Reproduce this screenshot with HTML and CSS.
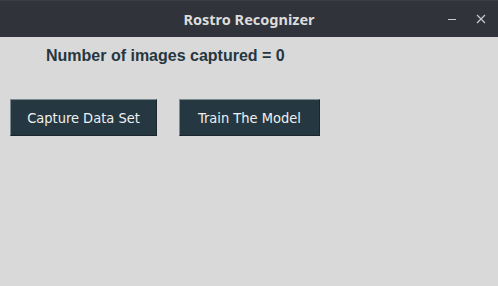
FILE: index.html
```html
<!DOCTYPE html>
<html lang="en">
<head>
    <meta charset="UTF-8">
    <title>Rostro Recognizer</title>
    <link rel="stylesheet" href="styles.css">
</head>
<body>
    <!-- Window title bar -->
    <header class="titlebar">
        <span class="title">Rostro Recognizer</span>
        <div class="controls">
            <svg class="ctl" width="10" height="10" viewBox="0 0 10 10">
                <line x1="1" y1="5.5" x2="9" y2="5.5" stroke="#c8c9cc" stroke-width="1"/>
            </svg>
            <svg class="ctl" width="10" height="10" viewBox="0 0 10 10">
                <path d="M1 1 L9 9 M9 1 L1 9" stroke="#c8c9cc" stroke-width="1.2"/>
            </svg>
        </div>
    </header>

    <main class="content">
        <p class="count">Number of images captured = 0</p>
        <div class="actions">
            <button class="btn btn-capture">Capture Data Set</button>
            <button class="btn btn-train">Train The Model</button>
        </div>
    </main>
</body>
</html>
```

FILE: styles.css
```css
body {
  margin: 0;
  padding: 0;
  background-color: #d9d9d9;
  font-family: "DejaVu Sans", sans-serif;
  height: 286px;
  overflow: hidden;
}

/* Title bar */
.titlebar {
  position: relative;
  height: 37px;
  background-color: #30333a;
  border-top: 1px solid #3b3e45;
  box-sizing: border-box;
  display: flex;
  align-items: center;
  justify-content: center;
}

.title {
  font-family: "Noto Sans", sans-serif;
  font-weight: bold;
  font-size: 14.5px;
  color: #dcdcdc;
}

.controls {
  position: absolute;
  right: 12px;
  top: 13px;
  display: flex;
  gap: 19px;
}

.ctl {
  display: block;
}

/* Main content */
.content {
  padding: 0 10px;
}

.count {
  margin: 10px 0 0 36px;
  font-family: "Liberation Sans", Arial, sans-serif;
  font-weight: bold;
  font-size: 16px;
  color: #263640;
}

.actions {
  display: flex;
  gap: 22px;
  margin-top: 34px;
}

.btn {
  height: 37px;
  background-color: #253842;
  color: #f0f0f0;
  font-family: "DejaVu Sans Condensed", "DejaVu Sans", sans-serif;
  font-stretch: condensed;
  font-size: 14.5px;
  border: 1px solid;
  border-color: #7d8b90 #1b262c #1b262c #7d8b90;
  padding: 0;
}

.btn-capture {
  width: 147px;
}

.btn-train {
  width: 141px;
}
```
